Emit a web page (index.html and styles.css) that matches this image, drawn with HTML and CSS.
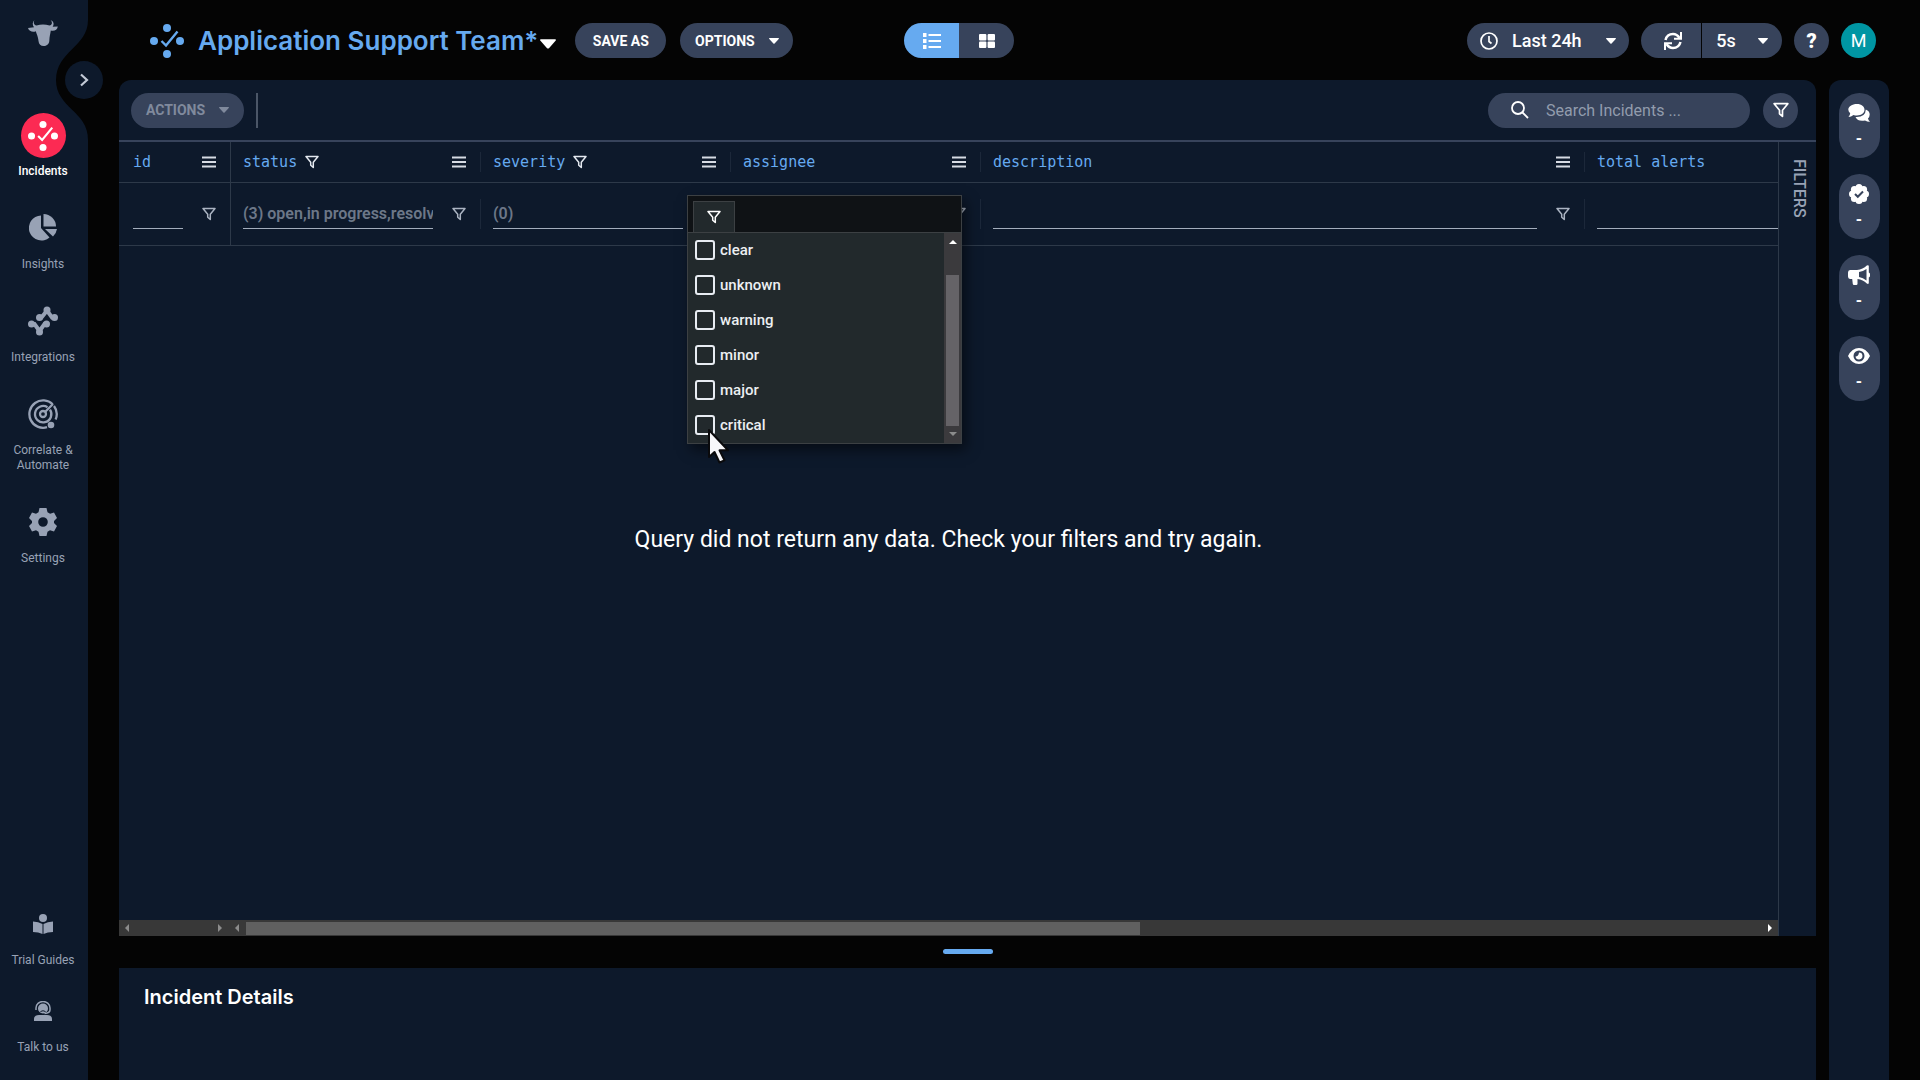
FILE: index.html
```html
<!DOCTYPE html>
<html lang="en">
<head>
<meta charset="utf-8">
<meta name="viewport" content="width=device-width, initial-scale=1">
<title>Incidents - Application Support Team</title>
<link rel="stylesheet" href="styles.css">
</head>
<body>
<svg class="defs" aria-hidden="true">
  <symbol id="i-incidents" viewBox="0 0 34 34"><g fill="currentColor"><circle cx="17" cy="4" r="4"/><circle cx="4" cy="17" r="4"/><circle cx="30" cy="17" r="4"/><circle cx="17" cy="30" r="4"/></g><path d="M11.500 17l4.500 4.500L27.500 7.500" fill="none" stroke="currentColor" stroke-width="2.400"/></symbol>
  <symbol id="i-funnel" viewBox="0 0 14 14"><path d="M1 1.500h12L8.300 7.200v5.300L5.700 10.300V7.200z" fill="none" stroke="currentColor" stroke-width="1.500" stroke-linejoin="round"/></symbol>
  <symbol id="i-menu" viewBox="0 0 14 12"><path d="M0 1.500h14M0 6h14M0 10.500h14" stroke="currentColor" stroke-width="2"/></symbol>
  <symbol id="i-caret" viewBox="0 0 10 6"><path d="M.5 0h9q.8.2.2 1L5.600 5.600q-.6.500-1.200 0L.3 1Q-.3.200.5 0z" fill="currentColor"/></symbol>
</svg>

<nav class="sidebar" aria-label="Main">
  <svg class="notch" viewBox="0 0 34 120" aria-hidden="true"><path d="M34 0H32C32 27 0 31 0 60C0 88 32 91 32 120h2z" fill="#040404"/></svg>
  <button class="expand" aria-label="Expand sidebar"><svg width="10" height="14" viewBox="0 0 10 14"><path d="M2 1.500L8 7l-6 5.500" fill="none" stroke="currentColor" stroke-width="2.200"/></svg></button>
  <a class="logo" href="#" aria-label="Home"><svg width="30" height="26" viewBox="0 0 30 26"><path d="M6.500 0C5 3 6.200 5 8.500 5.600Q15 3.400 21.500 5.600C23.800 5 25 3 22.600 0C26 1.500 26.300 4.500 24.600 6.800L29.800 6.500C29.500 10 26 11.500 22.800 10.500C22.300 14 21.500 16 21.300 21C21 24.500 18.500 26 15.700 26C12.700 26 10.800 24.500 10.500 21C10 16 8.500 14 7.800 11.200C5 12.500 1 11.500 0 8L6 7.200C4.200 5 4.300 2 6.500 0z" fill="currentColor"/></svg></a>
  <div class="nav-main">
    <a class="nav-item active" href="#"><span class="nav-icon"><svg width="30" height="30"><use href="#i-incidents"/></svg></span>Incidents</a>
    <a class="nav-item" href="#"><span class="nav-icon"><svg width="28" height="28" viewBox="0 0 28 28" fill="currentColor"><path d="M12 1.500V14l8.500 9.500A12.500 12.500 0 1 1 12 1.500z"/><path d="M14.500 0A13 12.500 0 0 1 27 12.500H14.500z"/><path d="M16 15h12a13 13 0 0 1-4 7.500z"/></svg></span>Insights</a>
    <a class="nav-item" href="#"><span class="nav-icon"><svg width="30" height="30" viewBox="0 0 30 30"><g fill="currentColor"><circle cx="3.500" cy="18" r="3.500"/><circle cx="11.500" cy="26" r="3.500"/><circle cx="18.500" cy="18" r="3.500"/><circle cx="11.500" cy="11.500" r="3.500"/><circle cx="19" cy="4" r="3.500"/><circle cx="26.500" cy="11.500" r="3.500"/></g><path d="M3.500 18h3l5 7l5-7h2M11.500 11.500h2L19 4.500l5 7h2" fill="none" stroke="currentColor" stroke-width="4"/></svg></span>Integrations</a>
    <a class="nav-item" href="#"><span class="nav-icon"><svg width="30" height="30" viewBox="0 0 30 30"><g fill="none" stroke="currentColor" stroke-width="2.300"><path d="M19 28.200A13.700 13.700 0 1 1 24.700 5.300M26 7A13.700 13.700 0 0 1 27.600 20.500"/><path d="M19.500 8.200A8.200 8.200 0 1 0 22 10.600"/><circle cx="15" cy="15" r="3"/><path d="M17 13L25 5"/></g><circle cx="23" cy="26" r="3.300" fill="currentColor"/></svg></span>Correlate &amp;<br>Automate</a>
    <a class="nav-item" href="#"><span class="nav-icon"><svg width="28" height="28" viewBox="0 0 28 28"><path fill="currentColor" fill-rule="evenodd" d="M10.500 0h7l1 4.200l2.600 1.500L25 4.500L28 10l-3 3v2l3 3l-3 5.500l-4-1.200l-2.500 1.500L17.500 28h-7l-1-4.200L7 22.300l-4 1.200L0 18l3-3v-2L0 10l3-5.500l4 1.200l2.500-1.500zM14 9.200a4.800 4.800 0 1 0 0 9.600a4.800 4.800 0 0 0 0-9.600z"/></svg></span>Settings</a>
  </div>
  <div class="nav-foot">
    <a class="nav-item" href="#"><span class="nav-icon"><svg width="20" height="20" viewBox="0 0 20 20" fill="currentColor"><circle cx="10" cy="4" r="4"/><path d="M0 7.500Q5.500 7.500 9.500 10v10Q5.500 18 0 18zM20 7.500Q14.500 7.500 10.500 10v10Q14.500 18 20 18z"/></svg></span>Trial Guides</a>
    <a class="nav-item" href="#"><span class="nav-icon"><svg width="18" height="20" viewBox="0 0 18 20"><circle cx="9" cy="7.500" r="5" fill="currentColor"/><path d="M2 9V7a7 6.500 0 0 1 14 0v2q0 3-5.500 3.500" fill="none" stroke="currentColor" stroke-width="1.500"/><path d="M0 20v-2.500Q.5 14 5 14h8q4.500 0 5 3.500V20z" fill="currentColor"/><path d="M6.500 10.500q2.500-1.500 5 0" fill="none" stroke="#0d192b"/></svg></span>Talk to us</a>
  </div>
</nav>

<div class="app">
  <header class="topbar">
    <svg class="title-icon" width="34" height="34" aria-hidden="true"><use href="#i-incidents"/></svg>
    <h1>Application Support Team*</h1>
    <button class="title-menu" aria-label="Choose view"><svg width="16" height="10"><use href="#i-caret"/></svg></button>
    <button class="pill save">SAVE AS</button>
    <button class="pill options">OPTIONS <svg width="10" height="6"><use href="#i-caret"/></svg></button>
    <div class="toggle">
      <button class="on" aria-label="List view"><svg width="18" height="16" viewBox="0 0 18 16"><path d="M0 0h3.500v4H0zM0 6h3.500v4H0zM0 12h3.500v4H0zM5.500 1H18v2H5.500zM5.500 7H18v2H5.500zM5.500 13H18v2H5.500z" fill="currentColor"/></svg></button>
      <button aria-label="Card view"><svg width="16" height="14" viewBox="0 0 16 14"><g fill="currentColor"><rect width="7.400" height="6.400" rx="1"/><rect x="8.600" width="7.400" height="6.400" rx="1"/><rect y="7.600" width="7.400" height="6.400" rx="1"/><rect x="8.600" y="7.600" width="7.400" height="6.400" rx="1"/></g></svg></button>
    </div>
    <div class="tools">
      <button class="pill range"><svg width="18" height="18" viewBox="0 0 18 18"><g fill="none" stroke="currentColor" stroke-width="1.700"><circle cx="9" cy="9" r="8"/><path d="M9 4v5.500l2.500 2"/></g></svg><span>Last 24h</span><svg class="range-caret" width="10" height="6"><use href="#i-caret"/></svg></button>
      <div class="refresh">
        <button class="reload" aria-label="Refresh"><svg width="18" height="18" viewBox="0 0 18 18"><g fill="none" stroke="currentColor" stroke-width="2.500"><path d="M1.500 8Q3 2 9 2q4 0 6.500 4M16.500 10Q15 16 9 16q-4 0-6.500-4"/><path d="M17 0v6.800h-7M1 18v-6.800h7" stroke-width="2"/></g></svg></button>
        <button class="interval">5s <svg width="10" height="6"><use href="#i-caret"/></svg></button>
      </div>
      <button class="round help" aria-label="Help">?</button>
      <button class="round avatar" aria-label="Account">M</button>
    </div>
  </header>

  <div class="body">
    <main class="main">
      <section class="panel">
        <div class="toolbar">
          <button class="pill actions" disabled>ACTIONS <svg width="10" height="6"><use href="#i-caret"/></svg></button>
          <span class="divider"></span>
          <label class="search"><svg width="18" height="18" viewBox="0 0 18 18" aria-hidden="true"><g fill="none" stroke="currentColor" stroke-width="1.800"><circle cx="7" cy="7" r="6"/><path d="M11.500 11.500L17 17"/></g></svg><input type="text" placeholder="Search Incidents ..." aria-label="Search incidents"></label>
          <button class="round filter-btn" aria-label="Filter"><svg width="16" height="16"><use href="#i-funnel"/></svg></button>
        </div>
        <div class="grid">
          <div class="grid-main">
            <table>
              <colgroup><col class="c-id"><col class="c-mid"><col class="c-mid"><col class="c-mid"><col><col class="c-total"></colgroup>
              <thead>
                <tr>
                  <th class="pinned"><div class="cell">id<button class="end" aria-label="id menu"><svg width="14" height="12"><use href="#i-menu"/></svg></button></div></th>
                  <th><div class="cell">status<svg class="mark" width="14" height="14"><use href="#i-funnel"/></svg><button class="end" aria-label="status menu"><svg width="14" height="12"><use href="#i-menu"/></svg></button><i></i></div></th>
                  <th><div class="cell">severity<svg class="mark" width="14" height="14"><use href="#i-funnel"/></svg><button class="end" aria-label="severity menu"><svg width="14" height="12"><use href="#i-menu"/></svg></button><i></i></div></th>
                  <th><div class="cell">assignee<button class="end" aria-label="assignee menu"><svg width="14" height="12"><use href="#i-menu"/></svg></button><i></i></div></th>
                  <th><div class="cell">description<button class="end" aria-label="description menu"><svg width="14" height="12"><use href="#i-menu"/></svg></button><i></i></div></th>
                  <th><div class="cell">total alerts</div></th>
                </tr>
                <tr class="filters">
                  <td class="pinned"><div class="cell"><input type="text" aria-label="Filter id"><button class="end" aria-label="Open id filter"><svg width="14" height="14"><use href="#i-funnel"/></svg></button></div></td>
                  <td><div class="cell"><input type="text" readonly value="(3) open,in progress,resolved" aria-label="Filter status"><button class="end" aria-label="Open status filter"><svg width="14" height="14"><use href="#i-funnel"/></svg></button><i></i></div></td>
                  <td><div class="cell"><input type="text" readonly value="(0)" aria-label="Filter severity"><button class="end" aria-label="Open severity filter"><svg width="14" height="14"><use href="#i-funnel"/></svg></button><i></i></div></td>
                  <td><div class="cell"><input type="text" aria-label="Filter assignee"><button class="end" aria-label="Open assignee filter"><svg width="14" height="14"><use href="#i-funnel"/></svg></button><i></i></div></td>
                  <td><div class="cell"><input type="text" aria-label="Filter description"><button class="end" aria-label="Open description filter"><svg width="14" height="14"><use href="#i-funnel"/></svg></button><i></i></div></td>
                  <td><div class="cell"><input type="text" aria-label="Filter total alerts"></div></td>
                </tr>
              </thead>
            </table>
            <div class="empty"><p>Query did not return any data. Check your filters and try again.</p></div>
            <div class="hscroll">
              <div class="hs-pinned"><b class="tri left"></b><b class="tri right"></b></div>
              <div class="hs-main"><b class="tri left"></b><div class="hs-track"><div class="hs-thumb"></div></div><b class="tri right lit"></b></div>
            </div>

            <div class="popup">
              <div class="tabs"><button class="tab" aria-label="Filter values"><svg width="14" height="14"><use href="#i-funnel"/></svg></button></div>
              <div class="pop-body">
                <div class="options-list">
                  <label><input type="checkbox">clear</label>
                  <label><input type="checkbox">unknown</label>
                  <label><input type="checkbox">warning</label>
                  <label><input type="checkbox">minor</label>
                  <label><input type="checkbox">major</label>
                  <label><input type="checkbox">critical</label>
                </div>
                <div class="vscroll"><b class="tri up lit"></b><div class="vs-thumb"></div><b class="tri down"></b></div>
              </div>
              <svg class="pointer" width="24" height="36" viewBox="0 0 24 36" aria-hidden="true"><path d="M2 2v27l5.500-5l5 10.500l5-2.200l-5-10h8.500z" fill="#f7f7fa" stroke="#0a0a0c" stroke-width="2" stroke-linejoin="round"/></svg>
            </div>
          </div>
          <button class="side-tab">FILTERS</button>
        </div>
      </section>
      <div class="splitter"><span></span></div>
      <section class="details"><h2>Incident Details</h2></section>
    </main>

    <aside class="rail" aria-label="Incident activity">
      <button><svg width="22" height="20" viewBox="0 0 22 20"><path d="M9 1C13.500 1 16.500 3.500 16.500 6.800S13.500 12.500 9 12.500Q7 12.500 5.500 12Q3 14 .5 14Q2 12.500 2.200 10.300Q.3 8.500.3 6.500C.3 3.500 4 1 9 1z" fill="currentColor"/><path d="M17.800 6.500Q21.700 8 21.700 11.500Q21.700 13.800 20 15.500Q20.300 17.500 22 18.800Q19.500 19 17 17.500Q10 19 7.500 14Q17.500 14.500 17.800 6.500z" fill="currentColor"/></svg><span>-</span></button>
      <button><svg width="20" height="20" viewBox="0 0 20 20"><g fill="currentColor"><circle cx="10" cy="10" r="7.500"/><circle cx="10" cy="3.500" r="3.500"/><circle cx="14.600" cy="5.400" r="3.500"/><circle cx="16.500" cy="10" r="3.500"/><circle cx="14.600" cy="14.600" r="3.500"/><circle cx="10" cy="16.500" r="3.500"/><circle cx="5.400" cy="14.600" r="3.500"/><circle cx="3.500" cy="10" r="3.500"/><circle cx="5.400" cy="5.400" r="3.500"/></g><path d="M6 10l2.800 2.800L14 7.500" fill="none" stroke="#37435b" stroke-width="2"/></svg><span>-</span></button>
      <button><svg width="22" height="20" viewBox="0 0 22 20"><path fill="currentColor" fill-rule="evenodd" d="M2 5h7Q15 4.500 18.800.600Q20.500-.500 20.800 1v6.500q1.400.5 1.400 2.500t-1.400 2.500V18q-.3 1.500-2 .6Q15 14.500 9.500 14v5q-.2 1-1.200 1H6q-1 0-1.200-1l-.6-5H2q-2-.3-2-2.500v-4Q0 5.300 2 5zM18.500 4Q15 6.500 11 7v5q4 .5 7.500 3.500z"/></svg><span>-</span></button>
      <button><svg width="22" height="16" viewBox="0 0 22 16"><path fill="currentColor" fill-rule="evenodd" d="M11 0Q18 0 22 8Q18 16 11 16T0 8Q4 0 11 0zM11 2.500a5.500 5.500 0 1 0 0 11a5.500 5.500 0 0 0 0-11z"/><path d="M11 4.500a3.500 3.500 0 1 1-3.500 4Q10.500 8.500 11 4.500z" fill="currentColor"/></svg><span>-</span></button>
    </aside>
  </div>
</div>
</body>
</html>
```

FILE: styles.css
```css
:root {
  --bg: #040404;
  --panel: #0d192b;
  --pill: #37435b;
  --line: #2d3949;
  --blue: #66aaf0;
  --muted: #98a2b5;
}

* { box-sizing: border-box; }

body {
  margin: 0;
  height: 100vh;
  display: flex;
  overflow: hidden;
  background: var(--bg);
  color: #fff;
  font-family: Roboto, "Open Sans", sans-serif;
  font-size: 15px;
}

button {
  display: flex;
  align-items: center;
  justify-content: center;
  margin: 0;
  padding: 0;
  border: 0;
  background: none;
  color: inherit;
  font: inherit;
}

a { color: inherit; text-decoration: none; }
svg { display: block; flex: none; }
.defs { position: absolute; width: 0; height: 0; }

/* Sidebar */
.sidebar {
  position: relative;
  flex: none;
  width: 88px;
  display: flex;
  flex-direction: column;
  padding: 20px 2px 25px 0;
  background: var(--panel);
  color: var(--muted);
}
.notch { position: absolute; top: 20px; left: 56px; width: 34px; height: 120px; }
.expand {
  position: absolute;
  top: 61px;
  left: 65px;
  width: 38px;
  height: 38px;
  border-radius: 50%;
  background: var(--panel);
  color: #c3cad6;
}
.logo { display: flex; justify-content: center; height: 93px; }
.nav-main, .nav-foot { display: flex; flex-direction: column; gap: 27px; }
.nav-foot { margin-top: auto; gap: 21px; }
.nav-item {
  display: flex;
  flex-direction: column;
  align-items: center;
  font-size: 12px;
  line-height: 15px;
  text-align: center;
}
.nav-icon {
  width: 45px;
  height: 44px;
  margin-bottom: 7px;
  display: flex;
  align-items: center;
  justify-content: center;
}
.active { color: #fff; font-weight: 500; }
.active .nav-icon { height: 45px; margin-bottom: 6px; border-radius: 50%; background: #fc2a53; }

/* Top bar */
.app { flex: 1; min-width: 0; display: flex; flex-direction: column; padding-left: 31px; }
.topbar {
  flex: none;
  display: flex;
  align-items: center;
  height: 81px;
  margin-bottom: -1px;
  padding: 0 44px 0 31px;
}
.title-icon { color: var(--blue); }
h1, h2 { margin: 0; font-family: Inter, "Open Sans", sans-serif; }
h1 { margin-left: 14px; font-size: 26px; font-weight: 600; line-height: 32px; color: var(--blue); white-space: nowrap; }
.title-menu { margin: 6px 19px 0 2px; }
.pill {
  flex: none;
  height: 35px;
  border-radius: 18px;
  background: var(--pill);
  font-size: 14px;
  font-weight: 700;
}
.save { width: 91px; }
.options, .actions { width: 113px; gap: 14px; }
.options { margin-left: 14px; }
.toggle { display: flex; flex: none; margin-left: 111px; border-radius: 18px; overflow: hidden; }
.toggle button { width: 55px; height: 35px; background: var(--pill); }
.toggle .on { background: var(--blue); }
.tools { display: flex; flex: none; margin-left: auto; gap: 12px; font-size: 18px; font-weight: 500; }
.range { width: 162px; justify-content: flex-start; gap: 14px; padding: 0 13px; font-size: 18px; font-weight: 500; }
.range-caret { margin-left: auto; }
.refresh { display: flex; gap: 1px; border-radius: 18px; overflow: hidden; }
.reload, .interval { height: 35px; background: var(--pill); }
.reload { width: 60px; padding-left: 4px; }
.interval { width: 80px; gap: 22px; }
.round { flex: none; width: 35px; height: 35px; border-radius: 50%; background: var(--pill); }
.help { font-size: 20px; font-weight: 900; }
.avatar { background: #0096a3; font-weight: 400; }

/* Work area */
.body { flex: 1; min-height: 0; display: flex; gap: 13px; padding-right: 31px; }
.main { flex: 1; min-width: 0; display: flex; flex-direction: column; }
.panel {
  flex: 1;
  min-height: 0;
  display: flex;
  flex-direction: column;
  border-radius: 12px 12px 0 0;
  background: var(--panel);
}
.toolbar {
  flex: none;
  display: flex;
  align-items: center;
  height: 62px;
  padding: 0 18px 0 12px;
  border-bottom: 2px solid var(--pill);
}
.actions { color: #808a9d; }
.divider { width: 2px; height: 35px; margin-left: 12px; background: #4b5667; }
.search {
  display: flex;
  align-items: center;
  gap: 17px;
  width: 262px;
  height: 35px;
  margin: 0 13px 0 auto;
  padding: 0 16px 0 23px;
  border-radius: 18px;
  background: var(--pill);
}
input[type="text"] {
  min-width: 0;
  flex: 1;
  padding: 0;
  border: 0;
  outline: 0;
  background: none;
  color: #6c7788;
  font: inherit;
}
.search input { font-size: 16px; }
.search input::placeholder { color: #929cad; opacity: 1; }

/* Incident grid */
.grid { flex: 1; min-height: 0; display: flex; }
.grid-main { position: relative; flex: 1; min-width: 0; display: flex; flex-direction: column; }
table { width: 100%; table-layout: fixed; border-collapse: separate; border-spacing: 0; }
.c-id { width: 112px; }
.c-mid { width: 250px; }
.c-total { width: 193px; }
th, td { padding: 0; border-bottom: 1px solid var(--line); }
.pinned { border-right: 1px solid var(--line); }
.cell {
  display: flex;
  align-items: center;
  height: 40px;
  padding-left: 12px;
  color: var(--blue);
  font-family: "DejaVu Sans Mono", "Liberation Mono", monospace;
  font-size: 15px;
  font-weight: 400;
}
.pinned .cell { padding-left: 14px; }
.mark { margin-left: 8px; color: #e3e8ef; }
.end { margin: 0 14px 0 auto; color: #d6dbe4; }
.cell i { width: 1px; height: 20px; background: #1c283a; }
.filters .cell { height: 62px; font-family: Roboto, sans-serif; font-size: 16px; font-weight: 600; }
.filters input { height: 30px; border-bottom: 1px solid #a3adbc; }
.filters .end { margin-left: 19px; color: #aab3c1; }
.filters i { height: 30px; }
.empty { flex: 1; display: flex; justify-content: center; padding-top: 280px; }
.empty p { margin: 0; font-size: 23px; line-height: 28px; }

.hscroll { display: flex; height: 16px; background: #383838; }
.hs-pinned { display: flex; align-items: center; justify-content: space-between; width: 112px; padding: 0 9px 0 6px; }
.hs-main { flex: 1; display: flex; align-items: center; padding: 0 6px 0 4px; }
.hs-track { flex: 1; margin: 0 6px 0 7px; }
.hs-thumb { width: 59%; height: 13px; background: #606060; }
.tri { width: 0; height: 0; border: 4px solid transparent; color: #8c8c8c; }
.lit { color: #fff; }
.left { border-left-width: 0; border-right-color: currentColor; }
.right { border-right-width: 0; border-left-color: currentColor; }
.up { border-top-width: 0; border-bottom-color: currentColor; }
.down { border-bottom-width: 0; border-top-color: currentColor; }

.side-tab {
  flex: none;
  width: 38px;
  align-items: center;
  justify-content: flex-start;
  padding: 17px 0 0 3px;
  border-left: 1px solid var(--line);
  writing-mode: vertical-rl;
  color: var(--muted);
  font-size: 16px;
  font-weight: 500;
}

/* Severity filter popup */
.popup {
  position: absolute;
  top: 53px;
  left: 568px;
  width: 275px;
  border: 1px solid #3c4043;
  background: #22292c;
  box-shadow: 4px 6px 12px rgba(0, 0, 0, .5);
}
.tabs { height: 37px; padding: 5px 0 0 5px; border-bottom: 1px solid #3c4043; background: #0f1215; }
.tab { width: 42px; height: 31px; border: 1px solid #3c4043; border-bottom: 0; background: #22292c; }
.pop-body { display: flex; }
.options-list { flex: 1; display: flex; flex-direction: column; gap: 15px; padding: 7px 7px 8px; }
.options-list label { display: flex; align-items: center; gap: 5px; height: 20px; font-size: 15px; font-weight: 500; color: #eceff2; }
.options-list input {
  appearance: none;
  width: 20px;
  height: 20px;
  margin: 0;
  border: 2px solid #e8ecf2;
  border-radius: 3px;
}
.vscroll { width: 17px; display: flex; flex-direction: column; align-items: center; padding: 7px 0; background: #3b3a3d; }
.vs-thumb { width: 13px; flex: 1; margin: 31px 0 6px; background: #656367; }
.pointer { position: absolute; top: 232px; left: 19px; }

/* Lower pane */
.splitter { flex: none; display: flex; align-items: center; justify-content: center; height: 32px; }
.splitter span { width: 50px; height: 5px; margin-bottom: 1px; border-radius: 3px; background: var(--blue); }
.details { flex: none; height: 112px; padding: 15px 25px; background: var(--panel); }
h2 { font-size: 20px; font-weight: 600; line-height: 28px; }

/* Right rail */
.rail {
  flex: none;
  width: 60px;
  display: flex;
  flex-direction: column;
  align-items: center;
  gap: 16px;
  padding-top: 13px;
  border-radius: 12px 12px 0 0;
  background: var(--panel);
}
.rail button {
  width: 41px;
  height: 65px;
  flex-direction: column;
  justify-content: flex-start;
  padding-top: 10px;
  border-radius: 21px;
  background: var(--pill);
  font-size: 16px;
  font-weight: 700;
}
.rail svg { height: 20px; }
.rail span { margin-top: 7px; line-height: 18px; }
```
